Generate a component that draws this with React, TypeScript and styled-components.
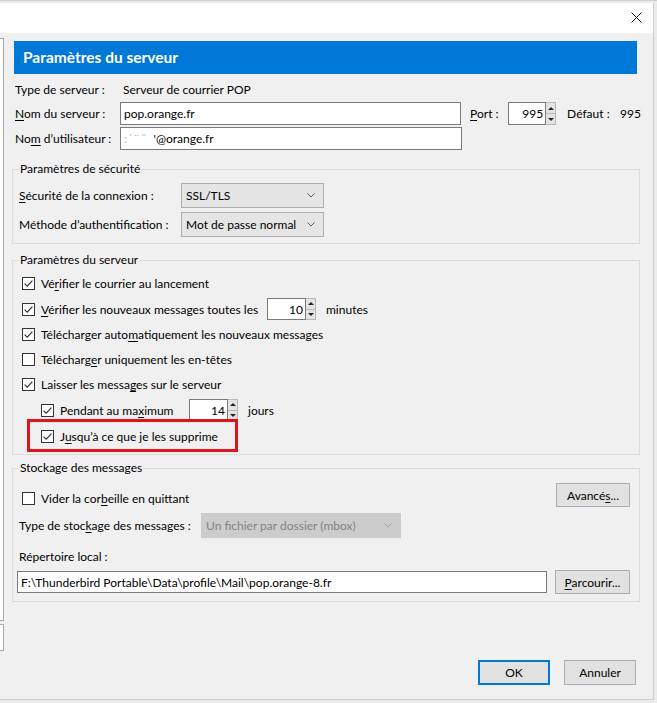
import React from "react";
import styled, { createGlobalStyle } from "styled-components";

const GlobalStyle = createGlobalStyle`
  html, body { margin: 0; padding: 0; }
  body {
    width: 657px;
    height: 703px;
    overflow: hidden;
    background: #ebebeb;
    font-family: Lato, "Liberation Sans", sans-serif;
    font-size: 12px;
    color: #000;
  }
  * { box-sizing: border-box; }
`;

const Screen = styled.div`
  height: 703px;
  padding-top: 2px;
  border-top: 1px solid #d0d0d0;
`;

const Window = styled.div`
  width: 654px;
  height: 697px;
  background: #f0f0f0;
  border-right: 1px solid #cdcdcd;
  border-bottom: 1px solid #cdcdcd;
  display: flex;
  flex-direction: column;
`;

const TitleBar = styled.div`
  height: 30px;
  flex-shrink: 0;
  background: #fff;
  display: flex;
  align-items: center;
  justify-content: flex-end;
  padding-right: 11px;
`;

const CloseGlyph = styled.svg`
  width: 11px;
  height: 11px;
  margin-top: -2px;
`;

const Body = styled.div`
  flex: 1;
  display: flex;
  min-height: 0;
`;

const SidePane = styled.div`
  width: 4px;
  flex-shrink: 0;
  display: flex;
  flex-direction: column;
  gap: 3px;
  padding-top: 5px;
`;

const SideBox = styled.div<{ $h: number }>`
  height: ${(p) => p.$h}px;
  background: #fff;
  border: 1px solid #a8a8a8;
  border-left: none;
`;

const Main = styled.div`
  width: 630px;
  margin-left: 7px;
  padding-top: 8px;
  display: flex;
  flex-direction: column;
`;

const Banner = styled.div`
  height: 33px;
  margin: 0 4px 0 3px;
  background: #0078d7;
  color: #fff;
  font-weight: 700;
  font-size: 15.5px;
  display: flex;
  align-items: center;
  padding-left: 9px;
  padding-bottom: 1px;
`;

const InfoBlock = styled.div`
  padding-left: 4px;
  margin-top: 5px;
  display: flex;
  flex-direction: column;
`;

const InfoRow = styled.div<{ $h: number; $gap?: number }>`
  height: ${(p) => p.$h}px;
  margin-top: ${(p) => p.$gap ?? 0}px;
  display: flex;
  align-items: center;
`;

const Label = styled.span<{ $w?: number; $ml?: number }>`
  ${(p) => (p.$w ? `width: ${p.$w}px; flex-shrink: 0;` : "")}
  margin-left: ${(p) => p.$ml ?? 0}px;
  white-space: nowrap;
`;

const PlainValue = styled.span`
  padding-left: 3px;
`;

const TextField = styled.div<{ $w: number; $h?: number; $ml?: number }>`
  width: ${(p) => p.$w}px;
  height: ${(p) => p.$h ?? 23}px;
  margin-left: ${(p) => p.$ml ?? 0}px;
  background: #fff;
  border: 1px solid #7a7a7a;
  padding-left: 3px;
  display: flex;
  align-items: center;
  white-space: nowrap;
  overflow: hidden;
`;

const Smudge = styled.span`
  color: #b4b4b4;
  letter-spacing: 2px;
  margin-right: 6px;
`;

const SpinWrap = styled.div<{ $w: number; $h: number }>`
  width: ${(p) => p.$w}px;
  height: ${(p) => p.$h}px;
  display: flex;
  flex-shrink: 0;
`;

const SpinValue = styled.div`
  flex: 1;
  background: #fff;
  border: 1px solid #7a7a7a;
  display: flex;
  align-items: center;
  justify-content: flex-end;
  padding-right: 2px;
`;

const SpinArrows = styled.div`
  width: 10px;
  display: flex;
  flex-direction: column;
  border: 1px solid #b8b8b8;
  border-left: none;
  background: #e4e4e4;
`;

const SpinArrow = styled.div<{ $down?: boolean }>`
  flex: 1;
  display: flex;
  align-items: center;
  justify-content: center;
  ${(p) => (p.$down ? "border-top: 1px solid #b8b8b8;" : "")}
  &::after {
    content: "";
    border-left: 3px solid transparent;
    border-right: 3px solid transparent;
    ${(p) =>
      p.$down ? "border-top: 3px solid #222;" : "border-bottom: 3px solid #222;"}
  }
`;

const Group = styled.fieldset<{ $mt: number; $pt: number; $pb: number }>`
  margin: ${(p) => p.$mt}px 1px 0;
  padding: ${(p) => p.$pt}px 9px ${(p) => p.$pb}px 6px;
  border: 1px solid #dcdcdc;
  min-width: 0;
`;

const GroupTitle = styled.legend`
  padding: 0 1px;
  line-height: 16px;
  font-size: 12px;
`;

const FormRow = styled.div<{ $h: number; $gap?: number }>`
  height: ${(p) => p.$h}px;
  margin-top: ${(p) => p.$gap ?? 0}px;
  display: flex;
  align-items: center;
`;

const Combo = styled.div<{ $w: number; $disabled?: boolean }>`
  width: ${(p) => p.$w}px;
  height: 25px;
  background: ${(p) => (p.$disabled ? "#cccccc" : "#e5e5e5")};
  border: 1px solid ${(p) => (p.$disabled ? "#cccccc" : "#adadad")};
  color: ${(p) => (p.$disabled ? "#838383" : "#000")};
  display: flex;
  align-items: center;
  justify-content: space-between;
  padding: 0 8px 0 4px;
  white-space: nowrap;
`;

const Chevron = styled.svg`
  width: 8px;
  height: 5px;
`;

const CheckRow = styled.div<{ $h: number; $indent?: number }>`
  height: ${(p) => p.$h}px;
  display: flex;
  align-items: center;
  padding-left: ${(p) => 3 + (p.$indent ?? 0)}px;
  gap: 6px;
  white-space: nowrap;
`;

const Box = styled.svg`
  width: 13px;
  height: 13px;
  flex-shrink: 0;
`;

const Highlight = styled.div`
  position: relative;
`;

const RedFrame = styled.div`
  position: absolute;
  left: 8px;
  top: -4px;
  width: 211px;
  height: 33px;
  border: 3px solid #e0141e;
  pointer-events: none;
`;

const StorageTop = styled.div`
  height: 24px;
  display: flex;
  justify-content: space-between;
  align-items: flex-start;
`;

const CheckSlot = styled.div`
  margin-top: 3px;
`;

const PushButton = styled.div<{ $w: number; $h?: number; $default?: boolean }>`
  width: ${(p) => p.$w}px;
  height: ${(p) => p.$h ?? 24}px;
  flex-shrink: 0;
  background: #e1e1e1;
  border: ${(p) => (p.$default ? "2px solid #0078d7" : "1px solid #adadad")};
  display: flex;
  align-items: center;
  justify-content: center;
`;

const Spacer = styled.div`
  flex: 1;
`;

const Footer = styled.div`
  display: flex;
  justify-content: flex-end;
  gap: 14px;
  padding: 0 5px 14px 0;
`;

const Key = styled.u`
  text-decoration-thickness: 1px;
  text-underline-offset: 2px;
`;

function CheckBox({ checked }: { checked: boolean }) {
  return (
    <Box viewBox="0 0 13 13">
      <rect x="0.5" y="0.5" width="12" height="12" fill="#fff" stroke="#333" />
      {checked && (
        <polyline
          points="2.6,6.6 5.2,9.2 10.4,3.6"
          fill="none"
          stroke="#333"
          strokeWidth="1.2"
        />
      )}
    </Box>
  );
}

function Spinner({ value, w, h }: { value: string; w: number; h: number }) {
  return (
    <SpinWrap $w={w} $h={h}>
      <SpinValue>{value}</SpinValue>
      <SpinArrows>
        <SpinArrow />
        <SpinArrow $down />
      </SpinArrows>
    </SpinWrap>
  );
}

function Select({ w, text, disabled }: { w: number; text: string; disabled?: boolean }) {
  return (
    <Combo $w={w} $disabled={disabled}>
      <span>{text}</span>
      <Chevron viewBox="0 0 8 5">
        <polyline
          points="0.5,0.5 4,4 7.5,0.5"
          fill="none"
          stroke={disabled ? "#a4a4a4" : "#606060"}
          strokeWidth="1"
        />
      </Chevron>
    </Combo>
  );
}

export default function App() {
  return (
    <>
      <GlobalStyle />
      <Screen>
        <Window>
          <TitleBar>
            <CloseGlyph viewBox="0 0 11 11">
              <path d="M0.5 0.5 L10.5 10.5 M10.5 0.5 L0.5 10.5" stroke="#111" strokeWidth="1" />
            </CloseGlyph>
          </TitleBar>
          <Body>
            <SidePane>
              <SideBox $h={583} />
              <SideBox $h={27} />
            </SidePane>
            <Main>
              <Banner>Paramètres du serveur</Banner>

              <InfoBlock>
                <InfoRow $h={20}>
                  <Label $w={105}>Type de serveur :</Label>
                  <PlainValue>Serveur de courrier POP</PlainValue>
                </InfoRow>
                <InfoRow $h={23} $gap={3}>
                  <Label $w={105}>
                    <Key>N</Key>om du serveur :
                  </Label>
                  <TextField $w={342}>pop.orange.fr</TextField>
                  <Label $w={38} $ml={9}>
                    <Key>P</Key>ort :
                  </Label>
                  <Spinner value="995" w={48} h={23} />
                  <Label $w={53} $ml={11}>Défaut :</Label>
                  <span>995</span>
                </InfoRow>
                <InfoRow $h={23} $gap={2}>
                  <Label $w={105}>
                    No<Key>m</Key> d’utilisateur :
                  </Label>
                  <TextField $w={342}>
                    <Smudge>:ˈ¨˝</Smudge>'@orange.fr
                  </TextField>
                </InfoRow>
              </InfoBlock>

              <Group $mt={11} $pt={6} $pb={6}>
                <GroupTitle>Paramètres de sécurité</GroupTitle>
                <FormRow $h={25}>
                  <Label $w={162}>
                    <Key>S</Key>écurité de la connexion :
                  </Label>
                  <Select w={143} text="SSL/TLS" />
                </FormRow>
                <FormRow $h={25} $gap={4}>
                  <Label $w={162}>
                    Méthode d’authent<Key>i</Key>fication :
                  </Label>
                  <Select w={143} text="Mot de passe normal" />
                </FormRow>
              </Group>

              <Group $mt={8} $pt={3} $pb={5}>
                <GroupTitle>Paramètres du serveur</GroupTitle>
                <CheckRow $h={25}>
                  <CheckBox checked />
                  <span>
                    Vé<Key>r</Key>ifier le courrier au lancement
                  </span>
                </CheckRow>
                <CheckRow $h={26}>
                  <CheckBox checked />
                  <Label $w={220}>
                    <Key>V</Key>érifier les nouveaux messages toutes les
                  </Label>
                  <Spinner value="10" w={49} h={22} />
                  <Label $ml={4}>minutes</Label>
                </CheckRow>
                <CheckRow $h={25}>
                  <CheckBox checked />
                  <span>
                    Télécharger auto<Key>m</Key>atiquement les nouveaux messages
                  </span>
                </CheckRow>
                <CheckRow $h={25}>
                  <CheckBox checked={false} />
                  <span>
                    Télécharg<Key>e</Key>r uniquement les en-têtes
                  </span>
                </CheckRow>
                <CheckRow $h={25}>
                  <CheckBox checked />
                  <span>
                    Laisser les messa<Key>g</Key>es sur le serveur
                  </span>
                </CheckRow>
                <CheckRow $h={26} $indent={19}>
                  <CheckBox checked />
                  <Label $w={123}>
                    Pendant au ma<Key>x</Key>imum
                  </Label>
                  <Spinner value="14" w={49} h={22} />
                  <Label $ml={4}>jours</Label>
                </CheckRow>
                <Highlight>
                  <CheckRow $h={26} $indent={19}>
                    <CheckBox checked />
                    <span>
                      J<Key>u</Key>squ’à ce que je les supprime
                    </span>
                  </CheckRow>
                  <RedFrame />
                </Highlight>
              </Group>

              <Group $mt={5} $pt={7} $pb={7}>
                <GroupTitle>Stockage des messages</GroupTitle>
                <StorageTop>
                  <CheckSlot>
                    <CheckRow $h={25}>
                      <CheckBox checked={false} />
                      <span>
                        Vider la cor<Key>b</Key>eille en quittant
                      </span>
                    </CheckRow>
                  </CheckSlot>
                  <PushButton $w={74}>
                    Avancé<Key>s</Key>...
                  </PushButton>
                </StorageTop>
                <FormRow $h={25} $gap={6}>
                  <Label $w={182}>
                    Type de stoc<Key>k</Key>age des messages :
                  </Label>
                  <Select w={200} text="Un fichier par dossier (mbox)" disabled />
                </FormRow>
                <FormRow $h={16} $gap={10}>
                  <Label>Répertoire local :</Label>
                </FormRow>
                <FormRow $h={24} $gap={6}>
                  <TextField $w={530} $h={22} $ml={-2}>
                    F:\Thunderbird Portable\Data\profile\Mail\pop.orange-8.fr
                  </TextField>
                  <Spacer />
                  <PushButton $w={75}>
                    <span>
                      <Key>P</Key>arcourir...
                    </span>
                  </PushButton>
                </FormRow>
              </Group>

              <Spacer />
              <Footer>
                <PushButton $w={72} $h={25} $default>
                  OK
                </PushButton>
                <PushButton $w={72} $h={25}>
                  Annuler
                </PushButton>
              </Footer>
            </Main>
          </Body>
        </Window>
      </Screen>
    </>
  );
}
